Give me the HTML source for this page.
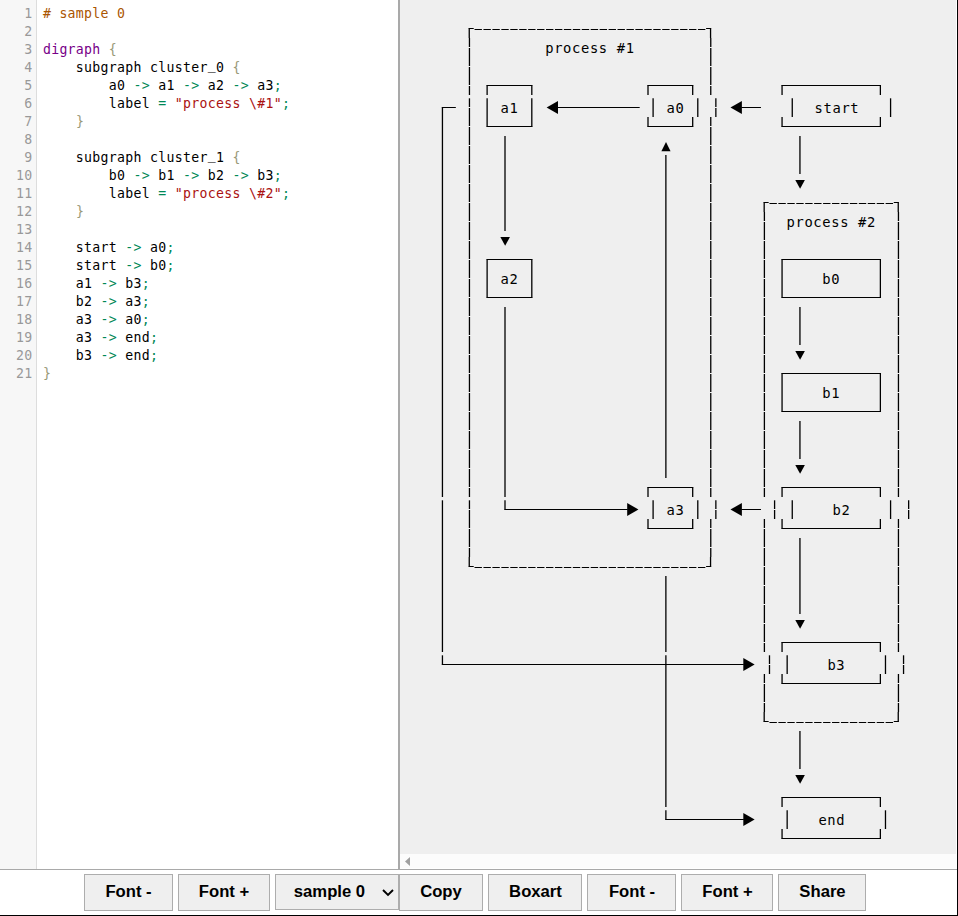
<!DOCTYPE html>
<html lang="en">
<head>
<meta charset="utf-8">
<title>dot-to-ascii</title>
<style>
html,body{margin:0;padding:0;}
body{width:958px;height:916px;position:relative;overflow:hidden;background:#fff;font-family:"Liberation Sans",sans-serif;}
.editor{position:absolute;left:0;top:0;width:398px;height:869px;background:#fff;overflow:hidden;}
.gutter{position:absolute;left:0;top:0;width:36px;height:869px;background:#f7f7f7;border-right:1px solid #ddd;}
.code{position:absolute;left:0;top:5px;width:398px;font-family:"DejaVu Sans Mono","Liberation Mono",monospace;font-size:13.2px;letter-spacing:0.303px;line-height:18px;color:#000;}
.ln{position:relative;height:18px;white-space:pre;}
.ln .no{position:absolute;left:0;width:32.5px;text-align:right;color:#999;}
.ln pre{position:absolute;left:42.9px;top:0;margin:0;font:inherit;letter-spacing:inherit;}
.us{position:relative;top:-3px;}
.c{color:#a50} .k{color:#708} .b{color:#997} .o{color:#085} .s{color:#a11}
.divider{position:absolute;left:398px;top:0;width:2px;height:869px;background:#a9a9a9;}
.out{position:absolute;left:400px;top:0;width:556px;height:854px;background:#efefef;overflow:hidden;}
.art{position:absolute;left:0;top:0;}
.lbl text{font-family:"DejaVu Sans Mono","Liberation Mono",monospace;font-size:13.8px;letter-spacing:0.6292px;fill:#000;white-space:pre;}
.hscroll{position:absolute;left:400px;top:854px;width:556px;height:14px;background:#fcfcfc;}
.hscroll svg{position:absolute;left:5px;top:3px;}
.bar{position:absolute;left:0;top:869px;width:957px;height:46px;background:#fff;border-top:1px solid #a9a9a9;box-sizing:border-box;}
.bar button,.bar .sel{position:absolute;top:4px;height:37px;box-sizing:border-box;border:1px solid #adadad;background:#efefef;color:#000;
 font-family:"Liberation Sans",sans-serif;font-weight:bold;font-size:16.67px;padding:0;margin:0;border-radius:0;text-align:center;line-height:30px;}
.bar button{padding-bottom:2px;}
.bar .sel{height:36px;text-align:left;}
.bar .sel select{position:absolute;left:0;top:0;width:122px;height:34px;margin:0;padding:0 0 0 17.8px;border:0;background:transparent;-webkit-appearance:none;appearance:none;font:inherit;color:#000;outline:none;}
.bar .sel svg{position:absolute;left:105.5px;top:13.5px;}
.edge-r{position:absolute;left:957px;top:0;width:1px;height:916px;background:#000;}
.edge-b{position:absolute;left:0;top:915px;width:958px;height:1px;background:#000;}
</style>
</head>
<body>
<div class="editor">
<div class="gutter"></div>
<div class="code">
<div class="ln"><span class="no">1</span><pre><span class="c"># sample 0</span></pre></div>
<div class="ln"><span class="no">2</span><pre></pre></div>
<div class="ln"><span class="no">3</span><pre><span class="k">digraph</span> <span class="b">{</span></pre></div>
<div class="ln"><span class="no">4</span><pre>    subgraph cluster<span class="us">_</span>0 <span class="b">{</span></pre></div>
<div class="ln"><span class="no">5</span><pre>        a0 <span class="o">-&gt;</span> a1 <span class="o">-&gt;</span> a2 <span class="o">-&gt;</span> a3<span class="o">;</span></pre></div>
<div class="ln"><span class="no">6</span><pre>        label <span class="o">=</span> <span class="s">"process \#1"</span><span class="o">;</span></pre></div>
<div class="ln"><span class="no">7</span><pre>    <span class="b">}</span></pre></div>
<div class="ln"><span class="no">8</span><pre></pre></div>
<div class="ln"><span class="no">9</span><pre>    subgraph cluster<span class="us">_</span>1 <span class="b">{</span></pre></div>
<div class="ln"><span class="no">10</span><pre>        b0 <span class="o">-&gt;</span> b1 <span class="o">-&gt;</span> b2 <span class="o">-&gt;</span> b3<span class="o">;</span></pre></div>
<div class="ln"><span class="no">11</span><pre>        label <span class="o">=</span> <span class="s">"process \#2"</span><span class="o">;</span></pre></div>
<div class="ln"><span class="no">12</span><pre>    <span class="b">}</span></pre></div>
<div class="ln"><span class="no">13</span><pre></pre></div>
<div class="ln"><span class="no">14</span><pre>    start <span class="o">-&gt;</span> a0<span class="o">;</span></pre></div>
<div class="ln"><span class="no">15</span><pre>    start <span class="o">-&gt;</span> b0<span class="o">;</span></pre></div>
<div class="ln"><span class="no">16</span><pre>    a1 <span class="o">-&gt;</span> b3<span class="o">;</span></pre></div>
<div class="ln"><span class="no">17</span><pre>    b2 <span class="o">-&gt;</span> a3<span class="o">;</span></pre></div>
<div class="ln"><span class="no">18</span><pre>    a3 <span class="o">-&gt;</span> a0<span class="o">;</span></pre></div>
<div class="ln"><span class="no">19</span><pre>    a3 <span class="o">-&gt;</span> end<span class="o">;</span></pre></div>
<div class="ln"><span class="no">20</span><pre>    b3 <span class="o">-&gt;</span> end<span class="o">;</span></pre></div>
<div class="ln"><span class="no">21</span><pre><span class="b">}</span></pre></div>
</div>
</div>
<div class="divider"></div>
<div class="out">
<svg class="art" width="558" height="854" viewBox="400 0 558 854">
<g stroke="#000" stroke-width="1.3" fill="none">
<line x1="468.60" y1="28.50" x2="473.72" y2="28.50" stroke-width="1"/>
<line x1="706.09" y1="28.50" x2="711.21" y2="28.50" stroke-width="1"/>
<line x1="469.25" y1="28.50" x2="469.25" y2="38.00"/>
<line x1="710.56" y1="28.50" x2="710.56" y2="38.00"/>
<line x1="474.52" y1="29.50" x2="481.92" y2="29.50" stroke-width="1"/>
<line x1="483.46" y1="29.50" x2="490.86" y2="29.50" stroke-width="1"/>
<line x1="492.39" y1="29.50" x2="499.79" y2="29.50" stroke-width="1"/>
<line x1="501.33" y1="29.50" x2="508.73" y2="29.50" stroke-width="1"/>
<line x1="510.27" y1="29.50" x2="517.67" y2="29.50" stroke-width="1"/>
<line x1="519.21" y1="29.50" x2="526.61" y2="29.50" stroke-width="1"/>
<line x1="528.14" y1="29.50" x2="535.54" y2="29.50" stroke-width="1"/>
<line x1="537.08" y1="29.50" x2="544.48" y2="29.50" stroke-width="1"/>
<line x1="546.02" y1="29.50" x2="553.42" y2="29.50" stroke-width="1"/>
<line x1="554.96" y1="29.50" x2="562.36" y2="29.50" stroke-width="1"/>
<line x1="563.89" y1="29.50" x2="571.29" y2="29.50" stroke-width="1"/>
<line x1="572.83" y1="29.50" x2="580.23" y2="29.50" stroke-width="1"/>
<line x1="581.77" y1="29.50" x2="589.17" y2="29.50" stroke-width="1"/>
<line x1="590.71" y1="29.50" x2="598.11" y2="29.50" stroke-width="1"/>
<line x1="599.64" y1="29.50" x2="607.04" y2="29.50" stroke-width="1"/>
<line x1="608.58" y1="29.50" x2="615.98" y2="29.50" stroke-width="1"/>
<line x1="617.52" y1="29.50" x2="624.92" y2="29.50" stroke-width="1"/>
<line x1="626.46" y1="29.50" x2="633.86" y2="29.50" stroke-width="1"/>
<line x1="635.39" y1="29.50" x2="642.79" y2="29.50" stroke-width="1"/>
<line x1="644.33" y1="29.50" x2="651.73" y2="29.50" stroke-width="1"/>
<line x1="653.27" y1="29.50" x2="660.67" y2="29.50" stroke-width="1"/>
<line x1="662.21" y1="29.50" x2="669.61" y2="29.50" stroke-width="1"/>
<line x1="671.14" y1="29.50" x2="678.54" y2="29.50" stroke-width="1"/>
<line x1="680.08" y1="29.50" x2="687.48" y2="29.50" stroke-width="1"/>
<line x1="689.02" y1="29.50" x2="696.42" y2="29.50" stroke-width="1"/>
<line x1="697.96" y1="29.50" x2="705.36" y2="29.50" stroke-width="1"/>
<line x1="468.60" y1="566.50" x2="473.72" y2="566.50" stroke-width="1"/>
<line x1="706.09" y1="566.50" x2="711.21" y2="566.50" stroke-width="1"/>
<line x1="469.25" y1="557.00" x2="469.25" y2="566.50"/>
<line x1="710.56" y1="557.00" x2="710.56" y2="566.50"/>
<line x1="474.52" y1="567.50" x2="481.92" y2="567.50" stroke-width="1"/>
<line x1="483.46" y1="567.50" x2="490.86" y2="567.50" stroke-width="1"/>
<line x1="492.39" y1="567.50" x2="499.79" y2="567.50" stroke-width="1"/>
<line x1="501.33" y1="567.50" x2="508.73" y2="567.50" stroke-width="1"/>
<line x1="510.27" y1="567.50" x2="517.67" y2="567.50" stroke-width="1"/>
<line x1="519.21" y1="567.50" x2="526.61" y2="567.50" stroke-width="1"/>
<line x1="528.14" y1="567.50" x2="535.54" y2="567.50" stroke-width="1"/>
<line x1="537.08" y1="567.50" x2="544.48" y2="567.50" stroke-width="1"/>
<line x1="546.02" y1="567.50" x2="553.42" y2="567.50" stroke-width="1"/>
<line x1="554.96" y1="567.50" x2="562.36" y2="567.50" stroke-width="1"/>
<line x1="563.89" y1="567.50" x2="571.29" y2="567.50" stroke-width="1"/>
<line x1="572.83" y1="567.50" x2="580.23" y2="567.50" stroke-width="1"/>
<line x1="581.77" y1="567.50" x2="589.17" y2="567.50" stroke-width="1"/>
<line x1="590.71" y1="567.50" x2="598.11" y2="567.50" stroke-width="1"/>
<line x1="599.64" y1="567.50" x2="607.04" y2="567.50" stroke-width="1"/>
<line x1="608.58" y1="567.50" x2="615.98" y2="567.50" stroke-width="1"/>
<line x1="617.52" y1="567.50" x2="624.92" y2="567.50" stroke-width="1"/>
<line x1="626.46" y1="567.50" x2="633.86" y2="567.50" stroke-width="1"/>
<line x1="635.39" y1="567.50" x2="642.79" y2="567.50" stroke-width="1"/>
<line x1="644.33" y1="567.50" x2="651.73" y2="567.50" stroke-width="1"/>
<line x1="653.27" y1="567.50" x2="660.67" y2="567.50" stroke-width="1"/>
<line x1="662.21" y1="567.50" x2="669.61" y2="567.50" stroke-width="1"/>
<line x1="671.14" y1="567.50" x2="678.54" y2="567.50" stroke-width="1"/>
<line x1="680.08" y1="567.50" x2="687.48" y2="567.50" stroke-width="1"/>
<line x1="689.02" y1="567.50" x2="696.42" y2="567.50" stroke-width="1"/>
<line x1="697.96" y1="567.50" x2="705.36" y2="567.50" stroke-width="1"/>
<line x1="469.45" y1="38.00" x2="469.45" y2="47.00"/>
<line x1="469.45" y1="48.00" x2="469.45" y2="57.00"/>
<line x1="710.76" y1="38.00" x2="710.76" y2="47.00"/>
<line x1="710.76" y1="48.00" x2="710.76" y2="57.00"/>
<line x1="469.45" y1="57.00" x2="469.45" y2="66.00"/>
<line x1="469.45" y1="67.00" x2="469.45" y2="76.00"/>
<line x1="710.76" y1="57.00" x2="710.76" y2="66.00"/>
<line x1="710.76" y1="67.00" x2="710.76" y2="76.00"/>
<line x1="469.45" y1="76.00" x2="469.45" y2="85.00"/>
<line x1="469.45" y1="86.00" x2="469.45" y2="95.00"/>
<line x1="710.76" y1="76.00" x2="710.76" y2="85.00"/>
<line x1="710.76" y1="86.00" x2="710.76" y2="95.00"/>
<line x1="469.45" y1="98.30" x2="469.45" y2="107.00"/>
<line x1="469.45" y1="108.00" x2="469.45" y2="117.00"/>
<line x1="715.86" y1="98.30" x2="715.86" y2="107.00"/>
<line x1="715.86" y1="108.00" x2="715.86" y2="117.00"/>
<line x1="469.45" y1="117.00" x2="469.45" y2="126.00"/>
<line x1="469.45" y1="127.00" x2="469.45" y2="136.00"/>
<line x1="710.76" y1="117.00" x2="710.76" y2="126.00"/>
<line x1="710.76" y1="127.00" x2="710.76" y2="136.00"/>
<line x1="469.45" y1="136.00" x2="469.45" y2="145.00"/>
<line x1="469.45" y1="146.00" x2="469.45" y2="155.00"/>
<line x1="710.76" y1="136.00" x2="710.76" y2="145.00"/>
<line x1="710.76" y1="146.00" x2="710.76" y2="155.00"/>
<line x1="469.45" y1="155.00" x2="469.45" y2="164.00"/>
<line x1="469.45" y1="165.00" x2="469.45" y2="174.00"/>
<line x1="710.76" y1="155.00" x2="710.76" y2="164.00"/>
<line x1="710.76" y1="165.00" x2="710.76" y2="174.00"/>
<line x1="469.45" y1="174.00" x2="469.45" y2="183.00"/>
<line x1="469.45" y1="184.00" x2="469.45" y2="193.00"/>
<line x1="710.76" y1="174.00" x2="710.76" y2="183.00"/>
<line x1="710.76" y1="184.00" x2="710.76" y2="193.00"/>
<line x1="469.45" y1="193.00" x2="469.45" y2="202.00"/>
<line x1="469.45" y1="203.00" x2="469.45" y2="212.00"/>
<line x1="710.76" y1="193.00" x2="710.76" y2="202.00"/>
<line x1="710.76" y1="203.00" x2="710.76" y2="212.00"/>
<line x1="469.45" y1="212.00" x2="469.45" y2="221.00"/>
<line x1="469.45" y1="222.00" x2="469.45" y2="231.00"/>
<line x1="710.76" y1="212.00" x2="710.76" y2="221.00"/>
<line x1="710.76" y1="222.00" x2="710.76" y2="231.00"/>
<line x1="469.45" y1="231.00" x2="469.45" y2="240.00"/>
<line x1="469.45" y1="241.00" x2="469.45" y2="250.00"/>
<line x1="710.76" y1="231.00" x2="710.76" y2="240.00"/>
<line x1="710.76" y1="241.00" x2="710.76" y2="250.00"/>
<line x1="469.45" y1="250.00" x2="469.45" y2="259.00"/>
<line x1="469.45" y1="260.00" x2="469.45" y2="269.00"/>
<line x1="710.76" y1="250.00" x2="710.76" y2="259.00"/>
<line x1="710.76" y1="260.00" x2="710.76" y2="269.00"/>
<line x1="469.45" y1="269.00" x2="469.45" y2="278.00"/>
<line x1="469.45" y1="279.00" x2="469.45" y2="288.00"/>
<line x1="710.76" y1="269.00" x2="710.76" y2="278.00"/>
<line x1="710.76" y1="279.00" x2="710.76" y2="288.00"/>
<line x1="469.45" y1="288.00" x2="469.45" y2="297.00"/>
<line x1="469.45" y1="298.00" x2="469.45" y2="307.00"/>
<line x1="710.76" y1="288.00" x2="710.76" y2="297.00"/>
<line x1="710.76" y1="298.00" x2="710.76" y2="307.00"/>
<line x1="469.45" y1="307.00" x2="469.45" y2="316.00"/>
<line x1="469.45" y1="317.00" x2="469.45" y2="326.00"/>
<line x1="710.76" y1="307.00" x2="710.76" y2="316.00"/>
<line x1="710.76" y1="317.00" x2="710.76" y2="326.00"/>
<line x1="469.45" y1="326.00" x2="469.45" y2="335.00"/>
<line x1="469.45" y1="336.00" x2="469.45" y2="345.00"/>
<line x1="710.76" y1="326.00" x2="710.76" y2="335.00"/>
<line x1="710.76" y1="336.00" x2="710.76" y2="345.00"/>
<line x1="469.45" y1="345.00" x2="469.45" y2="354.00"/>
<line x1="469.45" y1="355.00" x2="469.45" y2="364.00"/>
<line x1="710.76" y1="345.00" x2="710.76" y2="354.00"/>
<line x1="710.76" y1="355.00" x2="710.76" y2="364.00"/>
<line x1="469.45" y1="364.00" x2="469.45" y2="373.00"/>
<line x1="469.45" y1="374.00" x2="469.45" y2="383.00"/>
<line x1="710.76" y1="364.00" x2="710.76" y2="373.00"/>
<line x1="710.76" y1="374.00" x2="710.76" y2="383.00"/>
<line x1="469.45" y1="383.00" x2="469.45" y2="392.00"/>
<line x1="469.45" y1="393.00" x2="469.45" y2="402.00"/>
<line x1="710.76" y1="383.00" x2="710.76" y2="392.00"/>
<line x1="710.76" y1="393.00" x2="710.76" y2="402.00"/>
<line x1="469.45" y1="402.00" x2="469.45" y2="411.00"/>
<line x1="469.45" y1="412.00" x2="469.45" y2="421.00"/>
<line x1="710.76" y1="402.00" x2="710.76" y2="411.00"/>
<line x1="710.76" y1="412.00" x2="710.76" y2="421.00"/>
<line x1="469.45" y1="421.00" x2="469.45" y2="430.00"/>
<line x1="469.45" y1="431.00" x2="469.45" y2="440.00"/>
<line x1="710.76" y1="421.00" x2="710.76" y2="430.00"/>
<line x1="710.76" y1="431.00" x2="710.76" y2="440.00"/>
<line x1="469.45" y1="440.00" x2="469.45" y2="449.00"/>
<line x1="469.45" y1="450.00" x2="469.45" y2="459.00"/>
<line x1="710.76" y1="440.00" x2="710.76" y2="449.00"/>
<line x1="710.76" y1="450.00" x2="710.76" y2="459.00"/>
<line x1="469.45" y1="459.00" x2="469.45" y2="468.00"/>
<line x1="469.45" y1="469.00" x2="469.45" y2="478.00"/>
<line x1="710.76" y1="459.00" x2="710.76" y2="468.00"/>
<line x1="710.76" y1="469.00" x2="710.76" y2="478.00"/>
<line x1="469.45" y1="478.00" x2="469.45" y2="487.00"/>
<line x1="469.45" y1="488.00" x2="469.45" y2="497.00"/>
<line x1="710.76" y1="478.00" x2="710.76" y2="487.00"/>
<line x1="710.76" y1="488.00" x2="710.76" y2="497.00"/>
<line x1="469.45" y1="500.30" x2="469.45" y2="509.00"/>
<line x1="469.45" y1="510.00" x2="469.45" y2="519.00"/>
<line x1="715.86" y1="500.30" x2="715.86" y2="509.00"/>
<line x1="715.86" y1="510.00" x2="715.86" y2="519.00"/>
<line x1="469.45" y1="519.00" x2="469.45" y2="528.00"/>
<line x1="469.45" y1="529.00" x2="469.45" y2="538.00"/>
<line x1="710.76" y1="519.00" x2="710.76" y2="528.00"/>
<line x1="710.76" y1="529.00" x2="710.76" y2="538.00"/>
<line x1="469.45" y1="538.00" x2="469.45" y2="547.00"/>
<line x1="469.45" y1="548.00" x2="469.45" y2="557.00"/>
<line x1="710.76" y1="538.00" x2="710.76" y2="547.00"/>
<line x1="710.76" y1="548.00" x2="710.76" y2="557.00"/>
<line x1="763.54" y1="202.50" x2="768.66" y2="202.50" stroke-width="1"/>
<line x1="893.78" y1="202.50" x2="898.90" y2="202.50" stroke-width="1"/>
<line x1="764.19" y1="202.50" x2="764.19" y2="212.00"/>
<line x1="898.25" y1="202.50" x2="898.25" y2="212.00"/>
<line x1="769.46" y1="203.50" x2="776.86" y2="203.50" stroke-width="1"/>
<line x1="778.39" y1="203.50" x2="785.79" y2="203.50" stroke-width="1"/>
<line x1="787.33" y1="203.50" x2="794.73" y2="203.50" stroke-width="1"/>
<line x1="796.27" y1="203.50" x2="803.67" y2="203.50" stroke-width="1"/>
<line x1="805.21" y1="203.50" x2="812.61" y2="203.50" stroke-width="1"/>
<line x1="814.14" y1="203.50" x2="821.54" y2="203.50" stroke-width="1"/>
<line x1="823.08" y1="203.50" x2="830.48" y2="203.50" stroke-width="1"/>
<line x1="832.02" y1="203.50" x2="839.42" y2="203.50" stroke-width="1"/>
<line x1="840.96" y1="203.50" x2="848.36" y2="203.50" stroke-width="1"/>
<line x1="849.89" y1="203.50" x2="857.29" y2="203.50" stroke-width="1"/>
<line x1="858.83" y1="203.50" x2="866.23" y2="203.50" stroke-width="1"/>
<line x1="867.77" y1="203.50" x2="875.17" y2="203.50" stroke-width="1"/>
<line x1="876.71" y1="203.50" x2="884.11" y2="203.50" stroke-width="1"/>
<line x1="885.64" y1="203.50" x2="893.04" y2="203.50" stroke-width="1"/>
<line x1="763.54" y1="721.50" x2="768.66" y2="721.50" stroke-width="1"/>
<line x1="893.78" y1="721.50" x2="898.90" y2="721.50" stroke-width="1"/>
<line x1="764.19" y1="712.00" x2="764.19" y2="721.50"/>
<line x1="898.25" y1="712.00" x2="898.25" y2="721.50"/>
<line x1="769.46" y1="722.50" x2="776.86" y2="722.50" stroke-width="1"/>
<line x1="778.39" y1="722.50" x2="785.79" y2="722.50" stroke-width="1"/>
<line x1="787.33" y1="722.50" x2="794.73" y2="722.50" stroke-width="1"/>
<line x1="796.27" y1="722.50" x2="803.67" y2="722.50" stroke-width="1"/>
<line x1="805.21" y1="722.50" x2="812.61" y2="722.50" stroke-width="1"/>
<line x1="814.14" y1="722.50" x2="821.54" y2="722.50" stroke-width="1"/>
<line x1="823.08" y1="722.50" x2="830.48" y2="722.50" stroke-width="1"/>
<line x1="832.02" y1="722.50" x2="839.42" y2="722.50" stroke-width="1"/>
<line x1="840.96" y1="722.50" x2="848.36" y2="722.50" stroke-width="1"/>
<line x1="849.89" y1="722.50" x2="857.29" y2="722.50" stroke-width="1"/>
<line x1="858.83" y1="722.50" x2="866.23" y2="722.50" stroke-width="1"/>
<line x1="867.77" y1="722.50" x2="875.17" y2="722.50" stroke-width="1"/>
<line x1="876.71" y1="722.50" x2="884.11" y2="722.50" stroke-width="1"/>
<line x1="885.64" y1="722.50" x2="893.04" y2="722.50" stroke-width="1"/>
<line x1="764.39" y1="212.00" x2="764.39" y2="221.00"/>
<line x1="764.39" y1="222.00" x2="764.39" y2="231.00"/>
<line x1="898.45" y1="212.00" x2="898.45" y2="221.00"/>
<line x1="898.45" y1="222.00" x2="898.45" y2="231.00"/>
<line x1="764.39" y1="231.00" x2="764.39" y2="240.00"/>
<line x1="764.39" y1="241.00" x2="764.39" y2="250.00"/>
<line x1="898.45" y1="231.00" x2="898.45" y2="240.00"/>
<line x1="898.45" y1="241.00" x2="898.45" y2="250.00"/>
<line x1="764.39" y1="250.00" x2="764.39" y2="259.00"/>
<line x1="764.39" y1="260.00" x2="764.39" y2="269.00"/>
<line x1="898.45" y1="250.00" x2="898.45" y2="259.00"/>
<line x1="898.45" y1="260.00" x2="898.45" y2="269.00"/>
<line x1="764.39" y1="269.00" x2="764.39" y2="278.00"/>
<line x1="764.39" y1="279.00" x2="764.39" y2="288.00"/>
<line x1="898.45" y1="269.00" x2="898.45" y2="278.00"/>
<line x1="898.45" y1="279.00" x2="898.45" y2="288.00"/>
<line x1="764.39" y1="288.00" x2="764.39" y2="297.00"/>
<line x1="764.39" y1="298.00" x2="764.39" y2="307.00"/>
<line x1="898.45" y1="288.00" x2="898.45" y2="297.00"/>
<line x1="898.45" y1="298.00" x2="898.45" y2="307.00"/>
<line x1="764.39" y1="307.00" x2="764.39" y2="316.00"/>
<line x1="764.39" y1="317.00" x2="764.39" y2="326.00"/>
<line x1="898.45" y1="307.00" x2="898.45" y2="316.00"/>
<line x1="898.45" y1="317.00" x2="898.45" y2="326.00"/>
<line x1="764.39" y1="326.00" x2="764.39" y2="335.00"/>
<line x1="764.39" y1="336.00" x2="764.39" y2="345.00"/>
<line x1="898.45" y1="326.00" x2="898.45" y2="335.00"/>
<line x1="898.45" y1="336.00" x2="898.45" y2="345.00"/>
<line x1="764.39" y1="345.00" x2="764.39" y2="354.00"/>
<line x1="764.39" y1="355.00" x2="764.39" y2="364.00"/>
<line x1="898.45" y1="345.00" x2="898.45" y2="354.00"/>
<line x1="898.45" y1="355.00" x2="898.45" y2="364.00"/>
<line x1="764.39" y1="364.00" x2="764.39" y2="373.00"/>
<line x1="764.39" y1="374.00" x2="764.39" y2="383.00"/>
<line x1="898.45" y1="364.00" x2="898.45" y2="373.00"/>
<line x1="898.45" y1="374.00" x2="898.45" y2="383.00"/>
<line x1="764.39" y1="383.00" x2="764.39" y2="392.00"/>
<line x1="764.39" y1="393.00" x2="764.39" y2="402.00"/>
<line x1="898.45" y1="383.00" x2="898.45" y2="392.00"/>
<line x1="898.45" y1="393.00" x2="898.45" y2="402.00"/>
<line x1="764.39" y1="402.00" x2="764.39" y2="411.00"/>
<line x1="764.39" y1="412.00" x2="764.39" y2="421.00"/>
<line x1="898.45" y1="402.00" x2="898.45" y2="411.00"/>
<line x1="898.45" y1="412.00" x2="898.45" y2="421.00"/>
<line x1="764.39" y1="421.00" x2="764.39" y2="430.00"/>
<line x1="764.39" y1="431.00" x2="764.39" y2="440.00"/>
<line x1="898.45" y1="421.00" x2="898.45" y2="430.00"/>
<line x1="898.45" y1="431.00" x2="898.45" y2="440.00"/>
<line x1="764.39" y1="440.00" x2="764.39" y2="449.00"/>
<line x1="764.39" y1="450.00" x2="764.39" y2="459.00"/>
<line x1="898.45" y1="440.00" x2="898.45" y2="449.00"/>
<line x1="898.45" y1="450.00" x2="898.45" y2="459.00"/>
<line x1="764.39" y1="459.00" x2="764.39" y2="468.00"/>
<line x1="764.39" y1="469.00" x2="764.39" y2="478.00"/>
<line x1="898.45" y1="459.00" x2="898.45" y2="468.00"/>
<line x1="898.45" y1="469.00" x2="898.45" y2="478.00"/>
<line x1="764.39" y1="478.00" x2="764.39" y2="487.00"/>
<line x1="764.39" y1="488.00" x2="764.39" y2="497.00"/>
<line x1="898.45" y1="478.00" x2="898.45" y2="487.00"/>
<line x1="898.45" y1="488.00" x2="898.45" y2="497.00"/>
<line x1="774.59" y1="500.30" x2="774.59" y2="509.00"/>
<line x1="774.59" y1="510.00" x2="774.59" y2="519.00"/>
<line x1="908.65" y1="500.30" x2="908.65" y2="509.00"/>
<line x1="908.65" y1="510.00" x2="908.65" y2="519.00"/>
<line x1="764.39" y1="519.00" x2="764.39" y2="528.00"/>
<line x1="764.39" y1="529.00" x2="764.39" y2="538.00"/>
<line x1="898.45" y1="519.00" x2="898.45" y2="528.00"/>
<line x1="898.45" y1="529.00" x2="898.45" y2="538.00"/>
<line x1="764.39" y1="538.00" x2="764.39" y2="547.00"/>
<line x1="764.39" y1="548.00" x2="764.39" y2="557.00"/>
<line x1="898.45" y1="538.00" x2="898.45" y2="547.00"/>
<line x1="898.45" y1="548.00" x2="898.45" y2="557.00"/>
<line x1="764.39" y1="557.00" x2="764.39" y2="566.00"/>
<line x1="764.39" y1="567.00" x2="764.39" y2="576.00"/>
<line x1="898.45" y1="557.00" x2="898.45" y2="566.00"/>
<line x1="898.45" y1="567.00" x2="898.45" y2="576.00"/>
<line x1="764.39" y1="576.00" x2="764.39" y2="585.00"/>
<line x1="764.39" y1="586.00" x2="764.39" y2="595.00"/>
<line x1="898.45" y1="576.00" x2="898.45" y2="585.00"/>
<line x1="898.45" y1="586.00" x2="898.45" y2="595.00"/>
<line x1="764.39" y1="595.00" x2="764.39" y2="604.00"/>
<line x1="764.39" y1="605.00" x2="764.39" y2="614.00"/>
<line x1="898.45" y1="595.00" x2="898.45" y2="604.00"/>
<line x1="898.45" y1="605.00" x2="898.45" y2="614.00"/>
<line x1="764.39" y1="614.00" x2="764.39" y2="623.00"/>
<line x1="764.39" y1="624.00" x2="764.39" y2="633.00"/>
<line x1="898.45" y1="614.00" x2="898.45" y2="623.00"/>
<line x1="898.45" y1="624.00" x2="898.45" y2="633.00"/>
<line x1="764.39" y1="633.00" x2="764.39" y2="642.00"/>
<line x1="764.39" y1="643.00" x2="764.39" y2="652.00"/>
<line x1="898.45" y1="633.00" x2="898.45" y2="642.00"/>
<line x1="898.45" y1="643.00" x2="898.45" y2="652.00"/>
<line x1="769.49" y1="655.30" x2="769.49" y2="664.00"/>
<line x1="769.49" y1="665.00" x2="769.49" y2="674.00"/>
<line x1="903.55" y1="655.30" x2="903.55" y2="664.00"/>
<line x1="903.55" y1="665.00" x2="903.55" y2="674.00"/>
<line x1="764.39" y1="674.00" x2="764.39" y2="683.00"/>
<line x1="764.39" y1="684.00" x2="764.39" y2="693.00"/>
<line x1="898.45" y1="674.00" x2="898.45" y2="683.00"/>
<line x1="898.45" y1="684.00" x2="898.45" y2="693.00"/>
<line x1="764.39" y1="693.00" x2="764.39" y2="702.00"/>
<line x1="764.39" y1="703.00" x2="764.39" y2="712.00"/>
<line x1="898.45" y1="693.00" x2="898.45" y2="702.00"/>
<line x1="898.45" y1="703.00" x2="898.45" y2="712.00"/>
<line x1="486.48" y1="85.50" x2="532.46" y2="85.50" stroke-width="1"/>
<line x1="486.48" y1="126.50" x2="532.46" y2="126.50" stroke-width="1"/>
<line x1="487.12" y1="85.50" x2="487.12" y2="95.00"/>
<line x1="487.12" y1="98.30" x2="487.12" y2="117.00"/>
<line x1="487.12" y1="117.00" x2="487.12" y2="126.50"/>
<line x1="531.81" y1="85.50" x2="531.81" y2="95.00"/>
<line x1="531.81" y1="98.30" x2="531.81" y2="117.00"/>
<line x1="531.81" y1="117.00" x2="531.81" y2="126.50"/>
<line x1="647.35" y1="85.50" x2="693.34" y2="85.50" stroke-width="1"/>
<line x1="647.35" y1="126.50" x2="693.34" y2="126.50" stroke-width="1"/>
<line x1="648.00" y1="85.50" x2="648.00" y2="95.00"/>
<line x1="653.10" y1="98.30" x2="653.10" y2="117.00"/>
<line x1="648.00" y1="117.00" x2="648.00" y2="126.50"/>
<line x1="692.69" y1="85.50" x2="692.69" y2="95.00"/>
<line x1="697.79" y1="98.30" x2="697.79" y2="117.00"/>
<line x1="692.69" y1="117.00" x2="692.69" y2="126.50"/>
<line x1="781.41" y1="85.50" x2="881.02" y2="85.50" stroke-width="1"/>
<line x1="781.41" y1="126.50" x2="881.02" y2="126.50" stroke-width="1"/>
<line x1="782.06" y1="85.50" x2="782.06" y2="95.00"/>
<line x1="792.26" y1="98.30" x2="792.26" y2="117.00"/>
<line x1="782.06" y1="117.00" x2="782.06" y2="126.50"/>
<line x1="880.38" y1="85.50" x2="880.38" y2="95.00"/>
<line x1="890.58" y1="98.30" x2="890.58" y2="117.00"/>
<line x1="880.38" y1="117.00" x2="880.38" y2="126.50"/>
<line x1="486.48" y1="259.50" x2="532.46" y2="259.50" stroke-width="1"/>
<line x1="486.48" y1="297.50" x2="532.46" y2="297.50" stroke-width="1"/>
<line x1="487.12" y1="259.50" x2="487.12" y2="269.00"/>
<line x1="487.12" y1="269.00" x2="487.12" y2="288.00"/>
<line x1="487.12" y1="288.00" x2="487.12" y2="297.50"/>
<line x1="531.81" y1="259.50" x2="531.81" y2="269.00"/>
<line x1="531.81" y1="269.00" x2="531.81" y2="288.00"/>
<line x1="531.81" y1="288.00" x2="531.81" y2="297.50"/>
<line x1="781.41" y1="259.50" x2="881.02" y2="259.50" stroke-width="1"/>
<line x1="781.41" y1="297.50" x2="881.02" y2="297.50" stroke-width="1"/>
<line x1="782.06" y1="259.50" x2="782.06" y2="269.00"/>
<line x1="782.06" y1="269.00" x2="782.06" y2="288.00"/>
<line x1="782.06" y1="288.00" x2="782.06" y2="297.50"/>
<line x1="880.38" y1="259.50" x2="880.38" y2="269.00"/>
<line x1="880.38" y1="269.00" x2="880.38" y2="288.00"/>
<line x1="880.38" y1="288.00" x2="880.38" y2="297.50"/>
<line x1="781.41" y1="373.50" x2="881.02" y2="373.50" stroke-width="1"/>
<line x1="781.41" y1="411.50" x2="881.02" y2="411.50" stroke-width="1"/>
<line x1="782.06" y1="373.50" x2="782.06" y2="383.00"/>
<line x1="782.06" y1="383.00" x2="782.06" y2="402.00"/>
<line x1="782.06" y1="402.00" x2="782.06" y2="411.50"/>
<line x1="880.38" y1="373.50" x2="880.38" y2="383.00"/>
<line x1="880.38" y1="383.00" x2="880.38" y2="402.00"/>
<line x1="880.38" y1="402.00" x2="880.38" y2="411.50"/>
<line x1="647.35" y1="487.50" x2="693.34" y2="487.50" stroke-width="1"/>
<line x1="647.35" y1="528.50" x2="693.34" y2="528.50" stroke-width="1"/>
<line x1="648.00" y1="487.50" x2="648.00" y2="497.00"/>
<line x1="653.10" y1="500.30" x2="653.10" y2="519.00"/>
<line x1="648.00" y1="519.00" x2="648.00" y2="528.50"/>
<line x1="692.69" y1="487.50" x2="692.69" y2="497.00"/>
<line x1="697.79" y1="500.30" x2="697.79" y2="519.00"/>
<line x1="692.69" y1="519.00" x2="692.69" y2="528.50"/>
<line x1="781.41" y1="487.50" x2="881.02" y2="487.50" stroke-width="1"/>
<line x1="781.41" y1="528.50" x2="881.02" y2="528.50" stroke-width="1"/>
<line x1="782.06" y1="487.50" x2="782.06" y2="497.00"/>
<line x1="792.26" y1="500.30" x2="792.26" y2="519.00"/>
<line x1="782.06" y1="519.00" x2="782.06" y2="528.50"/>
<line x1="880.38" y1="487.50" x2="880.38" y2="497.00"/>
<line x1="890.58" y1="500.30" x2="890.58" y2="519.00"/>
<line x1="880.38" y1="519.00" x2="880.38" y2="528.50"/>
<line x1="781.41" y1="642.50" x2="881.02" y2="642.50" stroke-width="1"/>
<line x1="781.41" y1="683.50" x2="881.02" y2="683.50" stroke-width="1"/>
<line x1="782.06" y1="642.50" x2="782.06" y2="652.00"/>
<line x1="787.16" y1="655.30" x2="787.16" y2="674.00"/>
<line x1="782.06" y1="674.00" x2="782.06" y2="683.50"/>
<line x1="880.38" y1="642.50" x2="880.38" y2="652.00"/>
<line x1="885.48" y1="655.30" x2="885.48" y2="674.00"/>
<line x1="880.38" y1="674.00" x2="880.38" y2="683.50"/>
<line x1="781.41" y1="797.50" x2="881.02" y2="797.50" stroke-width="1"/>
<line x1="781.41" y1="838.50" x2="881.02" y2="838.50" stroke-width="1"/>
<line x1="782.06" y1="797.50" x2="782.06" y2="807.00"/>
<line x1="787.16" y1="810.30" x2="787.16" y2="829.00"/>
<line x1="782.06" y1="829.00" x2="782.06" y2="838.50"/>
<line x1="880.38" y1="797.50" x2="880.38" y2="807.00"/>
<line x1="885.48" y1="810.30" x2="885.48" y2="829.00"/>
<line x1="880.38" y1="829.00" x2="880.38" y2="838.50"/>
<line x1="557.52" y1="107.50" x2="639.69" y2="107.50" stroke-width="1"/>
<line x1="741.37" y1="107.50" x2="760.98" y2="107.50" stroke-width="1"/>
<line x1="505.00" y1="136.00" x2="505.00" y2="231.00"/>
<line x1="799.94" y1="136.00" x2="799.94" y2="174.00"/>
<line x1="665.88" y1="155.00" x2="665.88" y2="478.00"/>
<line x1="505.00" y1="307.00" x2="505.00" y2="497.00"/>
<line x1="505.00" y1="500.30" x2="505.00" y2="509.50"/>
<line x1="504.35" y1="509.50" x2="627.66" y2="509.50" stroke-width="1"/>
<line x1="741.37" y1="509.50" x2="760.98" y2="509.50" stroke-width="1"/>
<line x1="799.94" y1="307.00" x2="799.94" y2="345.00"/>
<line x1="799.94" y1="421.00" x2="799.94" y2="459.00"/>
<line x1="799.94" y1="538.00" x2="799.94" y2="614.00"/>
<line x1="799.94" y1="731.00" x2="799.94" y2="769.00"/>
<line x1="441.79" y1="107.50" x2="455.84" y2="107.50" stroke-width="1"/>
<line x1="442.44" y1="107.50" x2="442.44" y2="497.00"/>
<line x1="442.44" y1="500.30" x2="442.44" y2="652.00"/>
<line x1="442.44" y1="655.30" x2="442.44" y2="664.50"/>
<line x1="441.79" y1="664.50" x2="743.84" y2="664.50" stroke-width="1"/>
<line x1="665.88" y1="576.00" x2="665.88" y2="652.00"/>
<line x1="665.88" y1="655.30" x2="665.88" y2="807.00"/>
<line x1="665.88" y1="810.30" x2="665.88" y2="819.50"/>
<line x1="665.23" y1="819.50" x2="743.84" y2="819.50" stroke-width="1"/>
</g>
<g fill="#000" stroke="none">
<polygon points="546.62,107.50 558.02,101.00 558.02,114.00"/>
<polygon points="730.47,107.50 741.87,101.00 741.87,114.00"/>
<polygon points="500.35,237.00 509.95,237.00 505.15,245.80"/>
<polygon points="795.29,180.00 804.89,180.00 800.09,188.80"/>
<polygon points="661.38,151.30 670.58,151.30 665.98,142.10"/>
<polygon points="638.46,509.50 627.16,503.00 627.16,516.00"/>
<polygon points="730.47,509.50 741.87,503.00 741.87,516.00"/>
<polygon points="795.29,351.00 804.89,351.00 800.09,359.80"/>
<polygon points="795.29,465.00 804.89,465.00 800.09,473.80"/>
<polygon points="795.29,620.00 804.89,620.00 800.09,628.80"/>
<polygon points="795.29,775.00 804.89,775.00 800.09,783.80"/>
<polygon points="754.64,664.50 743.34,658.00 743.34,671.00"/>
<polygon points="754.64,819.50 743.34,813.00 743.34,826.00"/>
</g>
<g class="lbl">
<text x="545.22" y="53.00">process #1</text>
<text x="500.53" y="113.00">a1</text>
<text x="666.51" y="113.00">a0</text>
<text x="814.61" y="113.00">start</text>
<text x="500.53" y="284.00">a2</text>
<text x="786.53" y="227.00">process #2</text>
<text x="822.28" y="284.00">b0</text>
<text x="822.28" y="398.00">b1</text>
<text x="832.48" y="515.00">b2</text>
<text x="827.38" y="670.00">b3</text>
<text x="666.51" y="515.00">a3</text>
<text x="818.44" y="825.00">end</text>
</g>
</svg>
</div>
<div class="hscroll"><svg width="6" height="10" viewBox="0 0 6 10"><polygon points="0,4.5 5,0 5,9" fill="#a0a0a0"/></svg></div>
<div class="bar">
<button style="left:84px;width:89px;">Font -</button>
<button style="left:178px;width:92px;">Font +</button>
<div class="sel" style="left:275px;width:124px"><select aria-label="sample"><option>sample 0</option></select><svg width="12" height="8" viewBox="0 0 12 8"><path d="M1 1 L6 6 L11 1" fill="none" stroke="#000" stroke-width="1.9"/></svg></div>
<button style="left:399px;width:84px;">Copy</button>
<button style="left:488px;width:94px;padding-left:1px;">Boxart</button>
<button style="left:587px;width:89px;padding-left:1px;">Font -</button>
<button style="left:681px;width:92px;padding-left:1px;">Font +</button>
<button style="left:778px;width:88px;padding-left:1px;">Share</button>
</div>
<div class="edge-r"></div>
<div class="edge-b"></div>
</body>
</html>
